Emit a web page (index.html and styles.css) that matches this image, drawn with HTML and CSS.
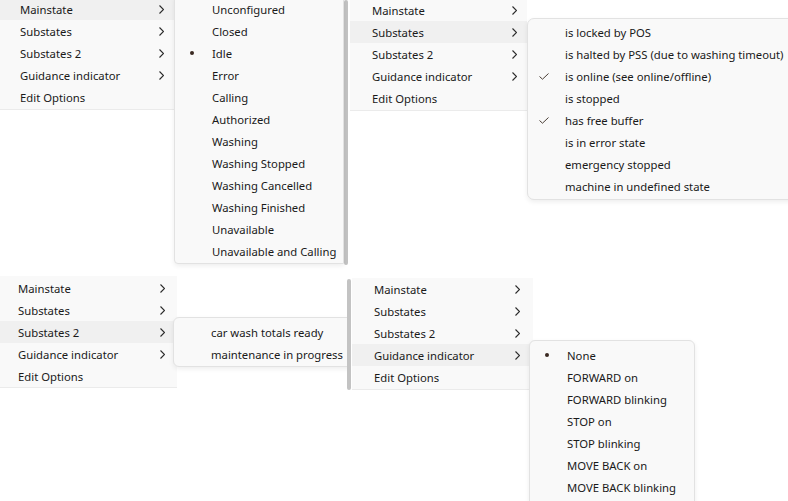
FILE: index.html
```html
<!DOCTYPE html>
<html>
<head>
<meta charset="utf-8">
<link rel="stylesheet" href="styles.css">
</head>
<body>
<div class="canvas">
  <div class="row row-top">
    <div class="panel p1">
      <div class="menu">
        <div class="item hot"><span class="label">Mainstate</span><svg class="chev" viewBox="0 0 5 9"><polyline points="0.5,0.5 4.5,4.5 0.5,8.5"/></svg></div>
        <div class="item"><span class="label">Substates</span><svg class="chev" viewBox="0 0 5 9"><polyline points="0.5,0.5 4.5,4.5 0.5,8.5"/></svg></div>
        <div class="item"><span class="label">Substates 2</span><svg class="chev" viewBox="0 0 5 9"><polyline points="0.5,0.5 4.5,4.5 0.5,8.5"/></svg></div>
        <div class="item"><span class="label">Guidance indicator</span><svg class="chev" viewBox="0 0 5 9"><polyline points="0.5,0.5 4.5,4.5 0.5,8.5"/></svg></div>
        <div class="item"><span class="label">Edit Options</span></div>
      </div>
      <div class="sub sub1">
        <div class="sitem">Unconfigured</div>
        <div class="sitem">Closed</div>
        <div class="sitem"><span class="dot"></span>Idle</div>
        <div class="sitem">Error</div>
        <div class="sitem">Calling</div>
        <div class="sitem">Authorized</div>
        <div class="sitem">Washing</div>
        <div class="sitem">Washing Stopped</div>
        <div class="sitem">Washing Cancelled</div>
        <div class="sitem">Washing Finished</div>
        <div class="sitem">Unavailable</div>
        <div class="sitem">Unavailable and Calling</div>
      </div>
    </div>
    <div class="bar bar-top"></div>
    <div class="panel p2">
      <div class="menu">
        <div class="item"><span class="label">Mainstate</span><svg class="chev" viewBox="0 0 5 9"><polyline points="0.5,0.5 4.5,4.5 0.5,8.5"/></svg></div>
        <div class="item hot"><span class="label">Substates</span><svg class="chev" viewBox="0 0 5 9"><polyline points="0.5,0.5 4.5,4.5 0.5,8.5"/></svg></div>
        <div class="item"><span class="label">Substates 2</span><svg class="chev" viewBox="0 0 5 9"><polyline points="0.5,0.5 4.5,4.5 0.5,8.5"/></svg></div>
        <div class="item"><span class="label">Guidance indicator</span><svg class="chev" viewBox="0 0 5 9"><polyline points="0.5,0.5 4.5,4.5 0.5,8.5"/></svg></div>
        <div class="item"><span class="label">Edit Options</span></div>
      </div>
      <div class="sub sub2">
        <div class="sitem">is locked by POS</div>
        <div class="sitem">is halted by PSS (due to washing timeout)</div>
        <div class="sitem"><svg class="check" viewBox="0 0 10 7"><polyline points="0.5,3.5 3.5,6.2 9.5,0.5"/></svg>is online (see online/offline)</div>
        <div class="sitem">is stopped</div>
        <div class="sitem"><svg class="check" viewBox="0 0 10 7"><polyline points="0.5,3.5 3.5,6.2 9.5,0.5"/></svg>has free buffer</div>
        <div class="sitem">is in error state</div>
        <div class="sitem">emergency stopped</div>
        <div class="sitem">machine in undefined state</div>
      </div>
    </div>
  </div>
  <div class="row row-bottom">
    <div class="panel p3">
      <div class="menu">
        <div class="item"><span class="label">Mainstate</span><svg class="chev" viewBox="0 0 5 9"><polyline points="0.5,0.5 4.5,4.5 0.5,8.5"/></svg></div>
        <div class="item"><span class="label">Substates</span><svg class="chev" viewBox="0 0 5 9"><polyline points="0.5,0.5 4.5,4.5 0.5,8.5"/></svg></div>
        <div class="item hot"><span class="label">Substates 2</span><svg class="chev" viewBox="0 0 5 9"><polyline points="0.5,0.5 4.5,4.5 0.5,8.5"/></svg></div>
        <div class="item"><span class="label">Guidance indicator</span><svg class="chev" viewBox="0 0 5 9"><polyline points="0.5,0.5 4.5,4.5 0.5,8.5"/></svg></div>
        <div class="item"><span class="label">Edit Options</span></div>
      </div>
      <div class="sub sub3">
        <div class="sitem">car wash totals ready</div>
        <div class="sitem">maintenance in progress</div>
      </div>
    </div>
    <div class="bar bar-bottom"></div>
    <div class="panel p4">
      <div class="menu">
        <div class="item"><span class="label">Mainstate</span><svg class="chev" viewBox="0 0 5 9"><polyline points="0.5,0.5 4.5,4.5 0.5,8.5"/></svg></div>
        <div class="item"><span class="label">Substates</span><svg class="chev" viewBox="0 0 5 9"><polyline points="0.5,0.5 4.5,4.5 0.5,8.5"/></svg></div>
        <div class="item"><span class="label">Substates 2</span><svg class="chev" viewBox="0 0 5 9"><polyline points="0.5,0.5 4.5,4.5 0.5,8.5"/></svg></div>
        <div class="item hot"><span class="label">Guidance indicator</span><svg class="chev" viewBox="0 0 5 9"><polyline points="0.5,0.5 4.5,4.5 0.5,8.5"/></svg></div>
        <div class="item"><span class="label">Edit Options</span></div>
      </div>
      <div class="sub sub4">
        <div class="sitem"><span class="dot"></span>None</div>
        <div class="sitem">FORWARD on</div>
        <div class="sitem">FORWARD blinking</div>
        <div class="sitem">STOP on</div>
        <div class="sitem">STOP blinking</div>
        <div class="sitem">MOVE BACK on</div>
        <div class="sitem">MOVE BACK blinking</div>
        <div class="sitem">&nbsp;</div>
      </div>
    </div>
  </div>
</div>
</body>
</html>
```
FILE: styles.css
```css
html, body {
  margin: 0;
  padding: 0;
  background: #ffffff;
}
body {
  width: 788px;
  height: 501px;
  overflow: hidden;
  font-family: "Noto Sans", "Open Sans", sans-serif;
  font-size: 11.3px;
  color: #1a1a1a;
}
.canvas {
  width: 788px;
  height: 501px;
  display: flex;
  flex-direction: column;
}
.row {
  display: flex;
  align-items: flex-start;
}
.row-top {
  height: 276px;
}
.row-bottom {
  height: 225px;
}
.panel {
  position: relative;
  height: 100%;
}
.p1 {
  width: 344px;
}
.p2 {
  flex: 1;
  margin-left: 2px;
  overflow: hidden;
}
.p3 {
  width: 347px;
  overflow: hidden;
}
.p4 {
  flex: 1;
  margin-left: 1px;
  overflow: hidden;
}
.bar {
  width: 4px;
  background: #c3c3c3;
  border-radius: 2px;
  flex: none;
}
.bar-top {
  height: 265px;
}
.bar-bottom {
  height: 111px;
  margin-top: 3px;
}

.menu {
  background: #f9f9f9;
  box-sizing: border-box;
  border-bottom: 1px solid #ebebeb;
}
.p1 .menu { width: 174px; margin-top: -2px; padding-bottom: 1px; }
.p2 .menu { width: 177px; margin-top: -1px; padding-bottom: 1px; }
.p3 .menu { width: 177px; padding-top: 1px; }
.p4 .menu { width: 181px; margin-top: 2px; padding-bottom: 1px; }

.item {
  height: 22px;
  line-height: 23px;
  position: relative;
  white-space: nowrap;
}
.item.hot {
  background: #f0f0f0;
}
.p1 .item { padding-left: 20px; }
.p2 .item { padding-left: 22px; }
.p3 .item { padding-left: 18px; }
.p4 .item { padding-left: 22px; }

.chev {
  position: absolute;
  top: 7px;
  width: 5px;
  height: 9px;
  fill: none;
  stroke: #2b2b2b;
  stroke-width: 1.1;
}
.p1 .chev { left: 159px; }
.p2 .chev { left: 162px; }
.p3 .chev { left: 160px; }
.p4 .chev { left: 163px; }

.sub {
  position: absolute;
  background: #f9f9f9;
  border: 1px solid #e2e2e2;
  box-sizing: border-box;
  box-shadow: 0 2px 5px rgba(0, 0, 0, 0.07);
}
.sub1 {
  left: 174px;
  top: -3px;
  width: 170px;
  height: 267px;
  border-radius: 0 0 0 4px;
}
.sub2 {
  left: 177px;
  top: 18px;
  width: 280px;
  padding: 2px 0;
  border-radius: 7px;
}
.sub3 {
  left: 173px;
  top: 41px;
  width: 200px;
  padding: 3px 0 1px;
  border-radius: 6px;
}
.sub4 {
  left: 177px;
  top: 64px;
  width: 166px;
  padding: 3px 0;
  border-radius: 6px;
}

.sitem {
  height: 22px;
  line-height: 23px;
  padding-left: 37px;
  position: relative;
  white-space: nowrap;
}

.dot {
  position: absolute;
  left: 15px;
  top: 9px;
  width: 4px;
  height: 4px;
  border-radius: 50%;
  background: #3a2a22;
}
.check {
  position: absolute;
  left: 11px;
  top: 8px;
  width: 10px;
  height: 7px;
  fill: none;
  stroke: #4a3e36;
  stroke-width: 1;
}
```
